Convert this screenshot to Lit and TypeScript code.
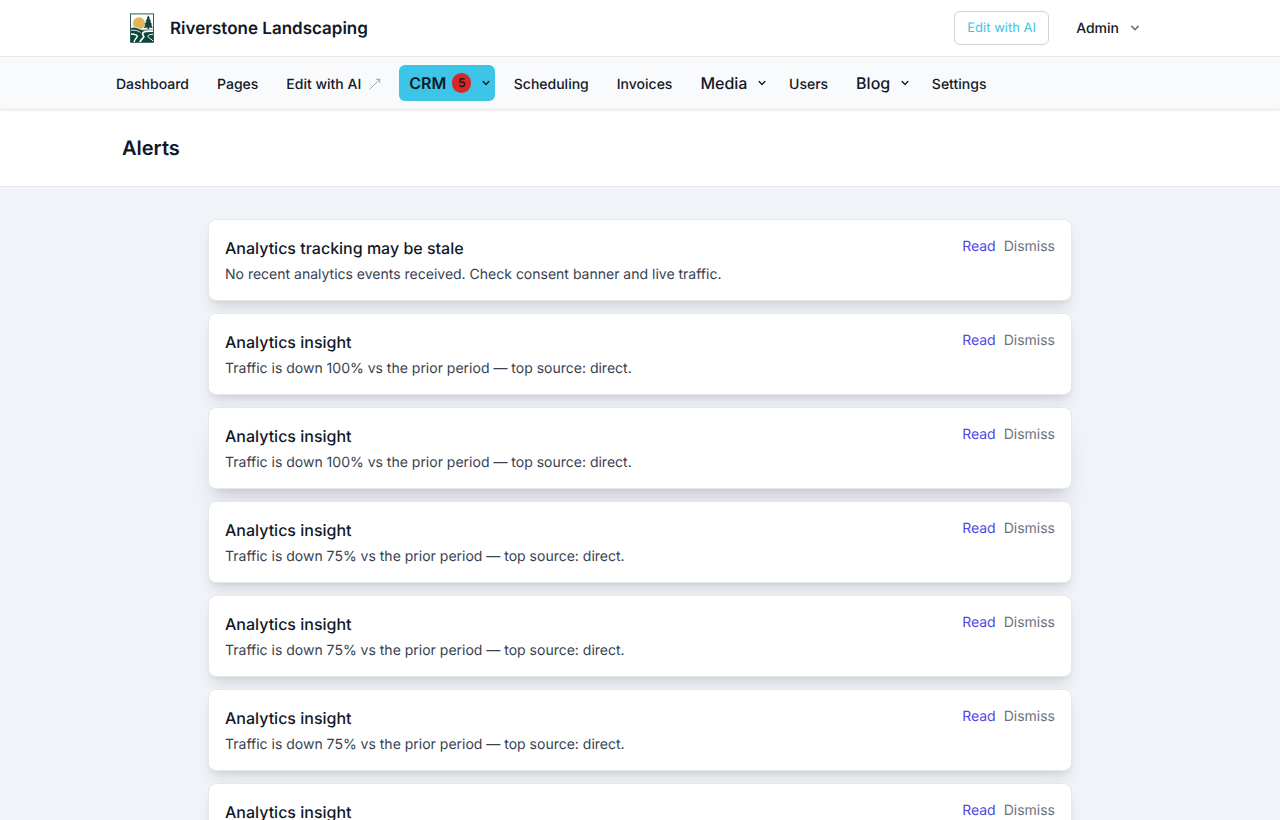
import { LitElement, html, css } from "lit";
import { customElement, property } from "lit/decorators.js";

const chevron = (cls: string) => html`<svg class=${cls} viewBox="0 0 20 20" fill="currentColor">
  <path fill-rule="evenodd" d="M5.293 7.293a1 1 0 011.414 0L10 10.586l3.293-3.293a1 1 0 111.414 1.414l-4 4a1 1 0 01-1.414 0l-4-4a1 1 0 010-1.414z" clip-rule="evenodd"/>
</svg>`;

interface Alert {
  title: string;
  body: string;
}

const insight = (pct: number): Alert => ({
  title: "Analytics insight",
  body: `Traffic is down ${pct}% vs the prior period — top source: direct.`,
});

const alerts: Alert[] = [
  {
    title: "Analytics tracking may be stale",
    body: "No recent analytics events received. Check consent banner and live traffic.",
  },
  insight(100),
  insight(100),
  insight(75),
  insight(75),
  insight(75),
  insight(75),
];

@customElement("site-logo")
export class SiteLogo extends LitElement {
  static styles = css`
    :host { display: block; width: 40px; height: 32px; }
    svg { display: block; width: 40px; height: 32px; }
  `;
  render() {
    return html`<svg viewBox="0 0 40 32">
      <rect x="8.500" y="1.900" width="23" height="28.400" fill="#fff" stroke="#2c5f56" stroke-width="1"/>
      <circle cx="17" cy="11.300" r="6" fill="#e2b557"/>
      <path d="M9 16q3.500-1.600 7 .2t7 1.200q4-.6 8-.4V30.300H9z" fill="#0d463d"/>
      <path d="M26.300 3.300l1.500 3-.6-.1 2 3.200-1.100-.1 2.100 3.200-1.100-.1 1.700 3.600-3.700-.5v2.600h-1.600v-2.600l-3.700.5 1.700-3.600-1.100.1 2.100-3.200-1.100.1 2-3.200-.6.100z" fill="#0d463d"/>
      <g fill="none" stroke="#fff">
        <path d="M9 15.400c5-1.400 8.500 2.200 13 2.600 4 .2 6-.6 9-.5" stroke-width=".8"/>
        <path d="M9 18.200c4-.3 7 .4 9.500 2.200" stroke-width=".9"/>
        <path d="M31 19.100c-5-.3-10 .6-10.500 2.300-.5 1.500 2.500 2.400.7 4.400-1.200 1.400-2.700 2.500-3.200 4.200" stroke-width="1.700"/>
        <path d="M9 21.900c4 .2 7.200 1.400 5.900 3.300-.9 1.400-2.300 2.500-2.900 4.800" stroke-width="1.500"/>
        <path d="M31 22.200c-4 .2-6.200 1.400-4.400 3.200 1.200 1.100 3.200 1.700 4.400 3.800" stroke-width="1"/>
      </g>
    </svg>`;
  }
}

@customElement("alert-card")
export class AlertCard extends LitElement {
  @property({ attribute: false }) alert!: Alert;
  @property({ type: Boolean, reflect: true }) raised = false;

  static styles = css`
    :host {
      display: flex;
      justify-content: space-between;
      align-items: flex-start;
      box-sizing: border-box;
      height: 82px;
      padding: 16px;
      background: #fff;
      border: 1px solid #e5e7eb;
      border-radius: 8px;
      box-shadow: 0 10px 15px -3px rgba(0, 0, 0, 0.1), 0 4px 6px -4px rgba(0, 0, 0, 0.1);
    }
    :host([raised]) {
      box-shadow: 0 20px 25px -5px rgba(0, 0, 0, 0.1), 0 8px 10px -6px rgba(0, 0, 0, 0.1);
    }
    .title { font-size: 16px; line-height: 24px; font-weight: 500; color: #111827; }
    .body { margin-top: 5px; font-size: 14px; line-height: 20px; color: #374151; }
    .actions { display: flex; gap: 8px; padding-top: 1px; font-size: 14px; line-height: 20px; }
    .read { color: #4f46e5; }
    .dismiss { color: #6b7280; }
  `;
  render() {
    return html`
      <div>
        <div class="title">${this.alert.title}</div>
        <div class="body">${this.alert.body}</div>
      </div>
      <div class="actions"><span class="read">Read</span><span class="dismiss">Dismiss</span></div>
    `;
  }
}

@customElement("app-root")
export class AppRoot extends LitElement {
  static styles = css`
    :host {
      display: block;
      height: 820px;
      overflow: hidden;
      background: #f0f4f9;
      color: #111827;
      font-family: Inter, sans-serif;
      text-rendering: geometricPrecision;
      -webkit-font-smoothing: antialiased;
    }
    .top, .nav, .heading { box-sizing: border-box; display: flex; align-items: center; }
    .top { height: 57px; padding: 0 137px 1px 122px; background: #fff; border-bottom: 1px solid #e5e7eb; }
    .brand { margin-left: 8px; padding-top: 2px; font-size: 17px; line-height: 24px; font-weight: 600; }
    .ai {
      box-sizing: border-box;
      display: flex;
      align-items: center;
      justify-content: center;
      width: 95px;
      height: 34px;
      margin-left: auto;
      border: 1px solid #d1d5db;
      border-radius: 6px;
      color: #3dc5e7;
      font-size: 13px;
      font-weight: 400;
    }
    .admin { margin-left: 27px; padding-top: 2px; font-size: 14px; line-height: 20px; font-weight: 500; }
    .caret { width: 16px; height: 16px; margin-left: 8px; color: #6b7280; }
    .nav {
      position: relative;
      height: 53px;
      padding-left: 116px;
      background: #f9fafc;
      border-bottom: 1px solid #e5e7eb;
      box-shadow: 0 1px 2px rgba(0, 0, 0, 0.05);
      font-size: 14px;
      font-weight: 500;
      gap: 28px;
      white-space: nowrap;
    }
    .item { display: flex; align-items: center; line-height: 20px; padding-top: 3px; }
    .menu { font-size: 16px; line-height: 24px; padding-top: 0; margin-right: -8.4px; }
    .out { width: 12px; height: 12px; margin: -1px 0 0 8px; }
    .crm {
      box-sizing: border-box;
      width: 96px;
      height: 36px;
      margin: 0 -9.5px 0 -10px;
      padding: 0 0 0 10px;
      border-radius: 6px;
      background: #3dc5e7;
      font-weight: 600;
    }
    .badge {
      display: flex;
      align-items: center;
      justify-content: center;
      width: 19px;
      height: 20px;
      margin-left: 6px;
      border-radius: 10px;
      background: #dc2626;
      font-size: 12px;
    }
    .drop { width: 14px; height: 14px; margin: -1px 0 0 8px; }
    .heading { height: 77px; padding-left: 122px; background: #fff; border-bottom: 1px solid #e5e7eb; }
    h1 { margin: 0; font-size: 20px; line-height: 28px; font-weight: 600; }
    .list { display: flex; flex-direction: column; gap: 12px; width: 864px; margin: 32px auto 0; }
  `;
  render() {
    return html`
      <header class="top">
        <site-logo></site-logo>
        <span class="brand">Riverstone Landscaping</span>
        <span class="ai">Edit with AI</span>
        <span class="admin">Admin</span>${chevron("caret")}
      </header>
      <nav class="nav">
        <span class="item">Dashboard</span>
        <span class="item">Pages</span>
        <span class="item">Edit with AI
          <svg class="out" viewBox="0 0 12 12" fill="none" stroke="#8b929e" stroke-width=".8">
            <path d="M.5 11.500L11 1M7 1.300h3.700v3.700"/>
          </svg>
        </span>
        <span class="item menu crm">CRM<span class="badge">5</span>${chevron("drop")}</span>
        <span class="item">Scheduling</span>
        <span class="item">Invoices</span>
        <span class="item menu">Media${chevron("drop")}</span>
        <span class="item">Users</span>
        <span class="item menu">Blog${chevron("drop")}</span>
        <span class="item">Settings</span>
      </nav>
      <div class="heading"><h1>Alerts</h1></div>
      <main class="list">
        ${alerts.map((a, i) => html`<alert-card .alert=${a} ?raised=${i === 2}></alert-card>`)}
      </main>
    `;
  }
}
